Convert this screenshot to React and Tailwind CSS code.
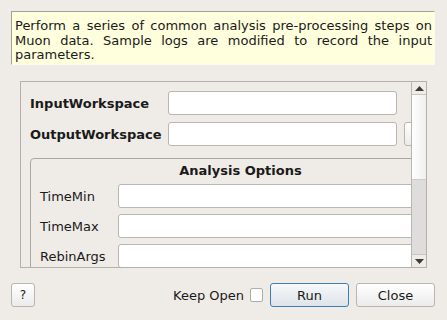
const Field = ({ label, bold, button }) => (
  <div className="flex items-center h-[24px]">
    <span className={`w-[138px] shrink-0 ${bold ? 'font-bold' : ''}`}>{label}</span>
    <div className="w-[229px] h-[24px] shrink-0 bg-white border border-[#b9b6b2] rounded-[3px]" />
    {button && (
      <div className="ml-[7px] w-[40px] h-[24px] shrink-0 border border-[#b9b6b2] rounded-[3px] bg-gradient-to-b from-white to-[#ebebeb]" />
    )}
  </div>
);

const OptionRow = ({ label }) => (
  <div className="flex items-center h-[24px]">
    <span className="w-[78px] shrink-0">{label}</span>
    <div className="w-[320px] h-[24px] shrink-0 bg-white border border-[#b9b6b2] rounded-[3px]" />
  </div>
);

const ScrollBar = () => (
  <div className="w-[15px] shrink-0 border-l border-[#b9b6b2] flex flex-col">
    <div className="h-[13px] border-b border-[#c9c6c2] flex items-center justify-center">
      <svg width="9" height="5" viewBox="0 0 9 5">
        <polygon points="4.5,0 9,5 0,5" fill="#3b3b3b" />
      </svg>
    </div>
    <div className="h-[85px] bg-gradient-to-r from-white to-[#f0efee] border-b border-[#cfccc8]" />
    <div className="flex-1 bg-[#dfdddb]" />
    <div className="h-[13px] border-t border-[#c9c6c2] flex items-center justify-center">
      <svg width="9" height="5" viewBox="0 0 9 5">
        <polygon points="0,0 9,0 4.5,5" fill="#3b3b3b" />
      </svg>
    </div>
  </div>
);

export default function App() {
  return (
    <div
      className="w-[447px] h-[320px] bg-[#efebe7] flex flex-col text-[13px] leading-[15px] text-[#1a1a1a] overflow-hidden"
      style={{ fontFamily: '"DejaVu Sans", sans-serif' }}
    >
      <div className="mt-[11px] ml-[11px] w-[424px] h-[54px] shrink-0 bg-[#ffffdd] border-t border-l border-[#a3a09c] border-r border-b border-r-[#fbfbf6] border-b-[#fbfbf6] pl-[3px] pr-[2px] pt-[7px] leading-[14.5px] text-justify overflow-hidden">
        Perform a series of common analysis pre-processing steps on Muon data. Sample logs are modified to record the input parameters.
      </div>

      <div className="mt-[16px] ml-[20px] w-[407px] h-[187px] shrink-0 border border-[#b4b1ad] flex">
        <div className="flex-1 overflow-hidden">
          <div className="w-[440px] pl-[9px] pt-[9px] flex flex-col gap-[7px]">
            <Field label="InputWorkspace" bold />
            <Field label="OutputWorkspace" bold button />
            <div className="mt-[5px] w-[412px] border border-[#aaa7a3] rounded-[4px] pl-[9px] pt-[4px] pb-[8px] flex flex-col gap-[6px]">
              <div className="font-bold text-center h-[15px]">Analysis Options</div>
              <OptionRow label="TimeMin" />
              <OptionRow label="TimeMax" />
              <OptionRow label="RebinArgs" />
            </div>
          </div>
        </div>
        <ScrollBar />
      </div>

      <div className="mt-[15px] ml-[11px] w-[424px] h-[24px] shrink-0 flex items-center">
        <button className="w-[24px] h-[24px] border border-[#b9b6b2] rounded-[3px] bg-gradient-to-b from-white to-[#ebebeb] text-[12px]">
          ?
        </button>
        <div className="flex-1" />
        <span>Keep Open</span>
        <div className="ml-[6px] w-[13px] h-[14px] bg-white border border-[#b0ada9] rounded-[2px]" />
        <button className="ml-[7px] w-[79px] h-[24px] border border-[#3e7fb3] rounded-[3px] bg-gradient-to-b from-[#f7f9fb] to-[#dde3e8]">
          Run
        </button>
        <button className="ml-[7px] w-[79px] h-[24px] border border-[#b9b6b2] rounded-[3px] bg-gradient-to-b from-white to-[#ebebeb]">
          Close
        </button>
      </div>
    </div>
  );
}
